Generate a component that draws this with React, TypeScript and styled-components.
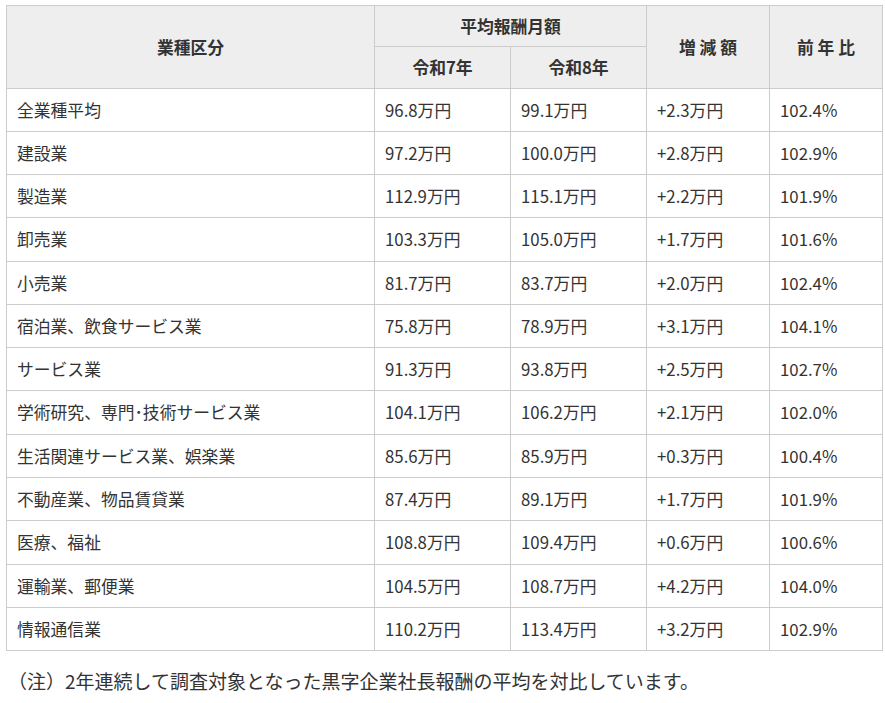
import React from "react";
import styled, { createGlobalStyle } from "styled-components";

const GlobalStyle = createGlobalStyle`
  html, body {
    margin: 0;
    padding: 0;
    background: #fff;
  }
  body {
    font-family: "Noto Sans CJK JP", "Noto Sans", sans-serif;
    color: #333;
  }
`;

const Page = styled.div`
  padding: 5px 3px 0 6px;
`;

const Table = styled.table`
  width: 876px;
  border-collapse: collapse;
  table-layout: fixed;
  font-size: 16.8px;
`;

const HeadCell = styled.th`
  background: #eeeeee;
  border: 1px solid #cccccc;
  font-weight: 700;
  text-align: center;
  padding: 9px 10px;
  line-height: 22.3px;
  color: #333;
`;

const Cell = styled.td`
  border: 1px solid #cccccc;
  text-align: left;
  padding: 10px 10px;
  line-height: 22.27px;
  color: #333;
  white-space: nowrap;
`;

const Note = styled.p`
  margin: 16px 0 0 2px;
  font-size: 19px;
  line-height: 27px;
  color: #333;
`;

interface IRow {
  name: string;
  r7: string;
  r8: string;
  diff: string;
  ratio: string;
}

const rows: IRow[] = [
  { name: "全業種平均", r7: "96.8万円", r8: "99.1万円", diff: "+2.3万円", ratio: "102.4%" },
  { name: "建設業", r7: "97.2万円", r8: "100.0万円", diff: "+2.8万円", ratio: "102.9%" },
  { name: "製造業", r7: "112.9万円", r8: "115.1万円", diff: "+2.2万円", ratio: "101.9%" },
  { name: "卸売業", r7: "103.3万円", r8: "105.0万円", diff: "+1.7万円", ratio: "101.6%" },
  { name: "小売業", r7: "81.7万円", r8: "83.7万円", diff: "+2.0万円", ratio: "102.4%" },
  { name: "宿泊業、飲食サービス業", r7: "75.8万円", r8: "78.9万円", diff: "+3.1万円", ratio: "104.1%" },
  { name: "サービス業", r7: "91.3万円", r8: "93.8万円", diff: "+2.5万円", ratio: "102.7%" },
  { name: "学術研究、専門･技術サービス業", r7: "104.1万円", r8: "106.2万円", diff: "+2.1万円", ratio: "102.0%" },
  { name: "生活関連サービス業、娯楽業", r7: "85.6万円", r8: "85.9万円", diff: "+0.3万円", ratio: "100.4%" },
  { name: "不動産業、物品賃貸業", r7: "87.4万円", r8: "89.1万円", diff: "+1.7万円", ratio: "101.9%" },
  { name: "医療、福祉", r7: "108.8万円", r8: "109.4万円", diff: "+0.6万円", ratio: "100.6%" },
  { name: "運輸業、郵便業", r7: "104.5万円", r8: "108.7万円", diff: "+4.2万円", ratio: "104.0%" },
  { name: "情報通信業", r7: "110.2万円", r8: "113.4万円", diff: "+3.2万円", ratio: "102.9%" },
];

const App: React.FC = () => (
  <Page>
    <GlobalStyle />
    <Table>
      <colgroup>
        <col style={{ width: 368 }} />
        <col style={{ width: 136 }} />
        <col style={{ width: 136 }} />
        <col style={{ width: 123 }} />
        <col style={{ width: 113 }} />
      </colgroup>
      <thead>
        <tr>
          <HeadCell rowSpan={2}>業種区分</HeadCell>
          <HeadCell colSpan={2}>平均報酬月額</HeadCell>
          <HeadCell rowSpan={2}>増 減 額</HeadCell>
          <HeadCell rowSpan={2}>前 年 比</HeadCell>
        </tr>
        <tr>
          <HeadCell>令和7年</HeadCell>
          <HeadCell>令和8年</HeadCell>
        </tr>
      </thead>
      <tbody>
        {rows.map((row) => (
          <tr key={row.name}>
            <Cell>{row.name}</Cell>
            <Cell>{row.r7}</Cell>
            <Cell>{row.r8}</Cell>
            <Cell>{row.diff}</Cell>
            <Cell>{row.ratio}</Cell>
          </tr>
        ))}
      </tbody>
    </Table>
    <Note>（注）2年連続して調査対象となった黒字企業社長報酬の平均を対比しています。</Note>
  </Page>
);

export default App;
